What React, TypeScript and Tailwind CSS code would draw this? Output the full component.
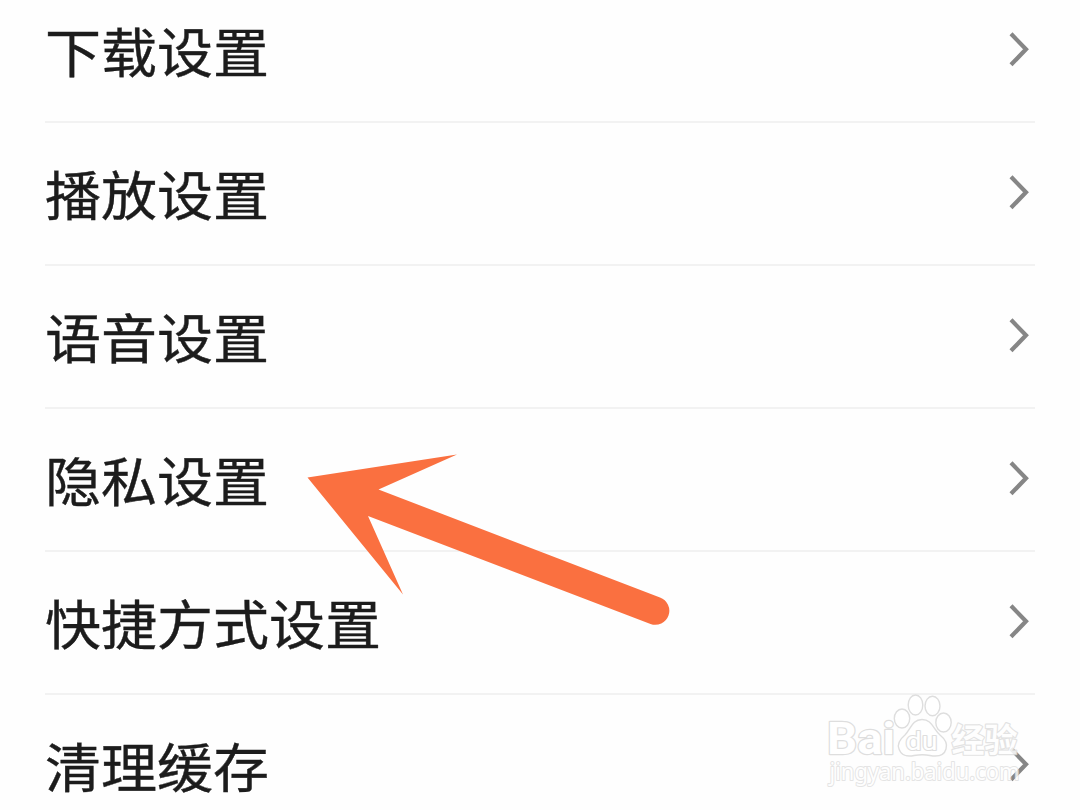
interface SettingRowProps {
	label: string
}

const settings = [
	"下载设置",
	"播放设置",
	"语音设置",
	"隐私设置",
	"快捷方式设置",
	"清理缓存",
]

function Chevron() {
	return (
		<svg
			className="mr-1 mb-[3px] h-10 w-6 shrink-0"
			viewBox="0 0 24 40"
			fill="none"
			stroke="#868686"
			strokeWidth="4.2"
			aria-hidden="true"
		>
			<path d="M4 4.8 19 20.3 4 35.8" />
		</svg>
	)
}

function SettingRow({ label }: SettingRowProps) {
	return (
		<li className="flex h-[143px] items-center justify-between border-b-2 border-[#f2f2f2]">
			<span className="mb-0.5 scale-y-[0.96] text-[56px] leading-none text-[#1c1c1c] [-webkit-text-stroke:0.4px_#1c1c1c]">
				{label}
			</span>
			<Chevron />
		</li>
	)
}

function PointerArrow() {
	return (
		<svg
			className="absolute top-[440px] left-[290px] h-[200px] w-[400px]"
			viewBox="290 440 400 200"
			fill="#fa7040"
			aria-hidden="true"
		>
			<path d="M307.5 477.5 457 454.5 378.5 489.5 660 597.5A14 14 0 0 1 650.5 624L368 516 403 594.5Z" />
		</svg>
	)
}

function Watermark() {
	return (
		<svg
			className="absolute top-[690px] left-[820px] h-[110px] w-[210px]"
			viewBox="820 690 210 110"
			fill="#ffffff"
			stroke="#dedede"
			strokeWidth="1.4"
			strokeLinejoin="round"
		>
			<text
				className="font-['Roboto'] font-bold [paint-order:stroke]"
				x="827"
				y="754"
				fontSize="44"
				strokeWidth="2.4"
				textLength="68"
				lengthAdjust="spacingAndGlyphs"
			>
				Bai
			</text>
			{/* paw */}
			<ellipse cx="902" cy="718.5" rx="7.7" ry="9.5" />
			<ellipse cx="915.5" cy="705" rx="7.3" ry="10" />
			<ellipse cx="932.5" cy="706" rx="7.5" ry="9.7" />
			<ellipse cx="943.5" cy="722.5" rx="7.7" ry="9.5" />
			<path d="M922 719.5C912 719.5 911 729 905 735C899 740 897 744 899 749C901 755 907 757 914 755.5C920 754.5 925 754.5 930 755.5C938 757 944 756 946 749C948 743 945 739 940 735C933 729 932 719.5 922 719.5Z" />
			<text
				className="font-['Roboto'] [paint-order:stroke]"
				x="905.5"
				y="749.5"
				fontSize="26"
				strokeWidth="2.2"
				textLength="32"
				lengthAdjust="spacingAndGlyphs"
			>
				du
			</text>
			<text
				className="font-['Noto_Sans_CJK_SC'] font-bold [paint-order:stroke]"
				x="951.5"
				y="751.5"
				fontSize="33"
				strokeWidth="2.4"
				opacity="0.85"
				textLength="66"
				lengthAdjust="spacingAndGlyphs"
			>
				经验
			</text>
			<text
				className="font-['Noto_Sans'] [paint-order:stroke]"
				x="829.5"
				y="780"
				fontSize="23"
				strokeWidth="2"
				opacity="0.8"
				textLength="190"
				lengthAdjust="spacingAndGlyphs"
			>
				jingyan.baidu.com
			</text>
		</svg>
	)
}

export default function App() {
	return (
		<main className="relative h-[810px] w-[1080px] overflow-hidden bg-[#fefefe] font-['Noto_Sans_CJK_SC',sans-serif]">
			<ul className="-mt-5 px-[45px]">
				{settings.map((label) => (
					<SettingRow key={label} label={label} />
				))}
			</ul>
			<PointerArrow />
			<Watermark />
		</main>
	)
}
